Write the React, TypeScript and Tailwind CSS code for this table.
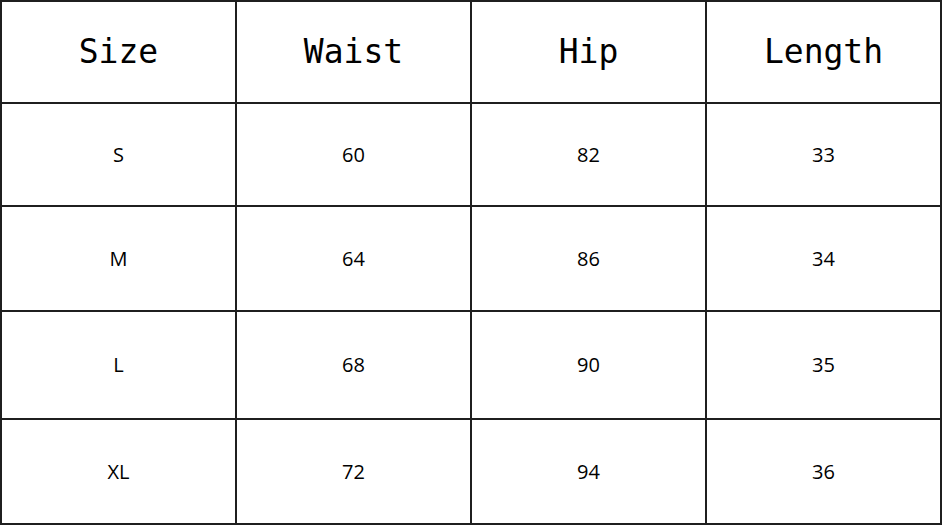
const headers = ["Size", "Waist", "Hip", "Length"];

const rows = [
  { size: "S", waist: "60", hip: "82", length: "33", h: "h-[103px]" },
  { size: "M", waist: "64", hip: "86", length: "34", h: "h-[105px]" },
  { size: "L", waist: "68", hip: "90", length: "35", h: "h-[108px]" },
  { size: "XL", waist: "72", hip: "94", length: "36", h: "h-[105px]" },
];

export default function App() {
  return (
    <div className="w-[944px] h-[526px] bg-white">
      <table className="w-[942px] border-collapse table-fixed">
        <thead>
          <tr className="h-[102px]">
            {headers.map((h) => (
              <th
                key={h}
                className="border-2 border-[#1f1f1f] text-center align-middle font-normal text-black text-[33px] font-['DejaVu_Sans_Mono',monospace]"
              >
                {h}
              </th>
            ))}
          </tr>
        </thead>
        <tbody>
          {rows.map((r) => (
            <tr key={r.size} className={r.h}>
              {[r.size, r.waist, r.hip, r.length].map((v, i) => (
                <td
                  key={i}
                  className="border-2 border-[#1f1f1f] text-center align-middle text-[20px] text-black font-['Open_Sans',sans-serif]"
                >
                  {v}
                </td>
              ))}
            </tr>
          ))}
        </tbody>
      </table>
    </div>
  );
}
